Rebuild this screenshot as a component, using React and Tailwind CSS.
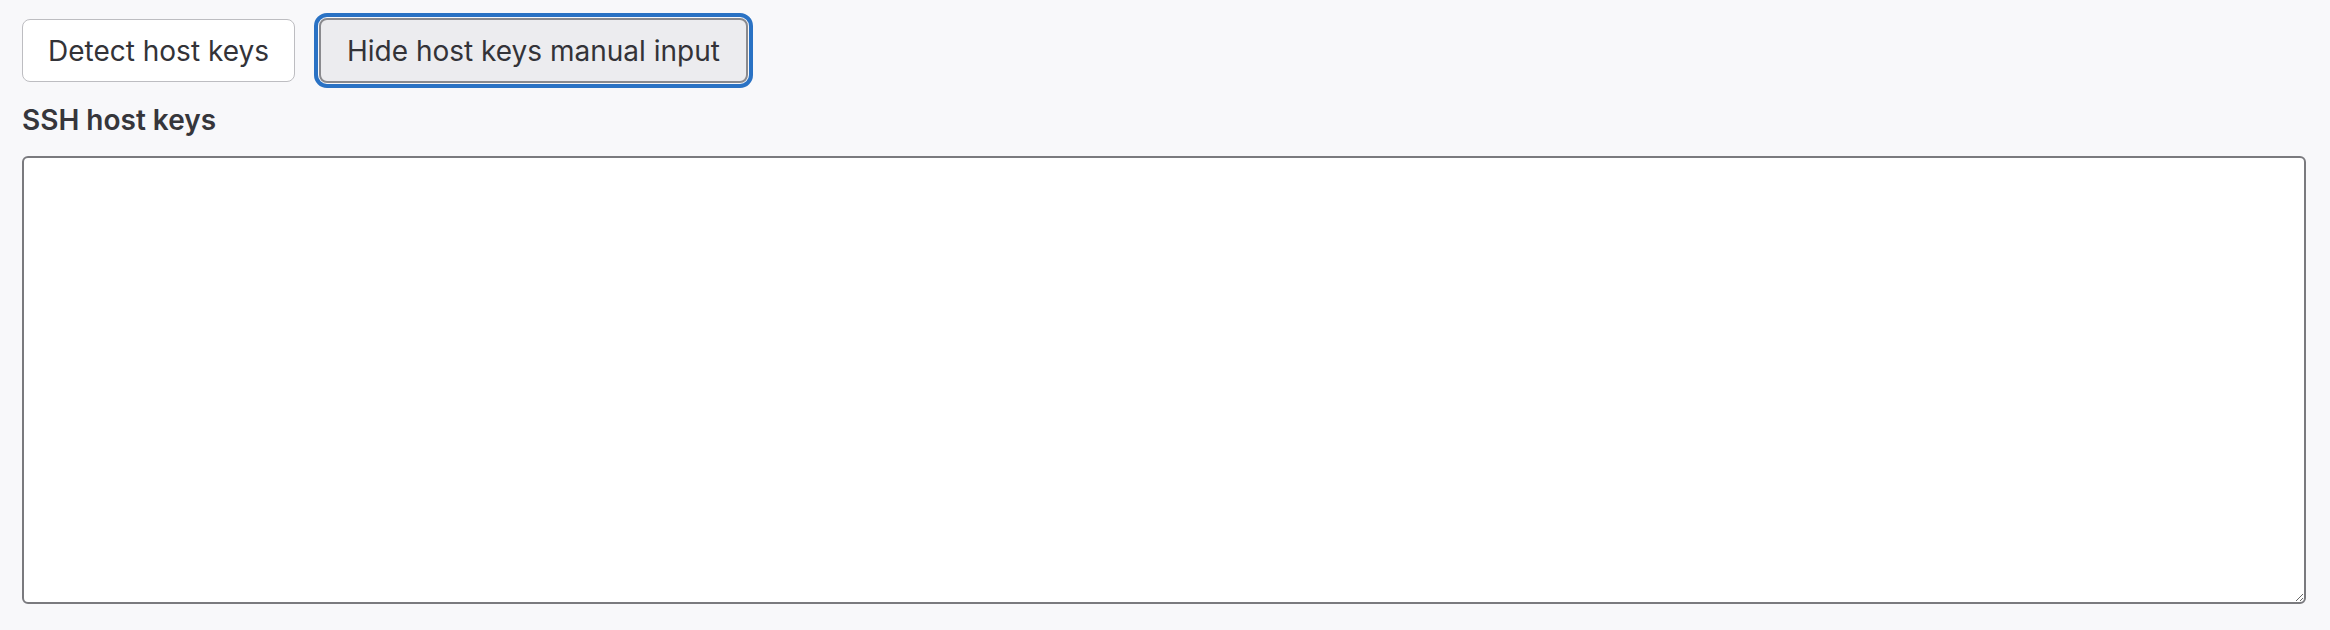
import React, { useState } from 'react'

const App = () => {
    const [keys, setKeys] = useState('')

    return (
        <div className="min-h-screen w-full bg-[#f8f8fa] pl-[22px] pr-[24px] pt-[18px] font-['Inter',sans-serif] text-[#333338]">
            <div className="flex items-center gap-[24px]">
                <button className="h-[63px] rounded-[8px] border border-[#bdbdc1] bg-white px-[25px] text-[28px] leading-none text-[#333338]">
                    Detect host keys
                </button>
                <button className="h-[65px] rounded-[8px] border-2 border-[#8a8a8e] bg-[#ececef] px-[26px] text-[28px] leading-none text-[#333338] outline-4 outline-offset-1 outline-solid outline-[#2a72c4]">
                    Hide host keys manual input
                </button>
            </div>
            <div className="mt-[21px]">
                <label className="block text-[28px] font-semibold leading-[32px] text-[#36363b]">SSH host keys</label>
                <textarea
                    value={keys}
                    onChange={(e) => setKeys(e.target.value)}
                    className="mt-[20px] block h-[448px] w-full resize-y rounded-[6px] border-2 border-[#7a7a7e] bg-white p-3 text-[24px]"
                />
            </div>
        </div>
    )
}

export default App
